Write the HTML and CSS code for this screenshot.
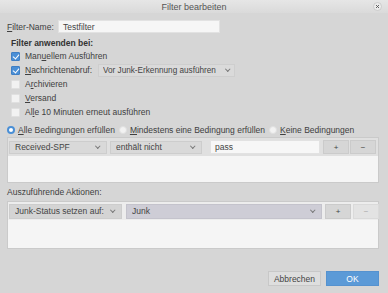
FILE: index.html
```html
<!DOCTYPE html>
<html lang="de">
<head>
<meta charset="utf-8">
<title>Filter bearbeiten</title>
<link rel="stylesheet" href="styles.css">
</head>
<body>
<div class="window">
  <div class="titlebar">
    <span class="title">Filter bearbeiten</span>
    <span class="close"><svg width="9" height="9" viewBox="0 0 9 9"><circle cx="4.5" cy="4.5" r="4" fill="#ececec" stroke="#c4c4c4" stroke-width="0.8"/><path d="M3 3 L6 6 M6 3 L3 6" stroke="#555" stroke-width="0.9"/></svg></span>
  </div>
  <div class="content">
    <div class="name-row">
      <span class="name-label"><u>F</u>ilter-Name:</span>
      <span class="textfield name-field">Testfilter</span>
    </div>
    <div class="heading">Filter anwenden bei:</div>
    <div class="checks">
      <div class="check-row"><span class="cb checked"></span><span>Man<u>u</u>ellem Ausführen</span></div>
      <div class="check-row"><span class="cb checked"></span><span class="fetch-label"><u>N</u>achrichtenabruf:</span><span class="dropdown fetch-drop"><span class="dd-text">Vor Junk-Erkennung ausführen</span><span class="chev"></span></span></div>
      <div class="check-row"><span class="cb"></span><span>A<u>r</u>chivieren</span></div>
      <div class="check-row"><span class="cb"></span><span><u>V</u>ersand</span></div>
      <div class="check-row"><span class="cb"></span><span>Al<u>l</u>e 10 Minuten erneut ausführen</span></div>
    </div>
    <div class="radio-row">
      <span class="radio on"></span><span class="radio-label"><u>A</u>lle Bedingungen erfüllen</span>
      <span class="radio"></span><span class="radio-label"><u>M</u>indestens eine Bedingung erfüllen</span>
      <span class="radio"></span><span class="radio-label"><u>K</u>eine Bedingungen</span>
    </div>
    <div class="listbox cond-box">
      <div class="list-row cond-row">
        <span class="dropdown dd-field"><span class="dd-text">Received-SPF</span><span class="chev"></span></span>
        <span class="dropdown dd-op"><span class="dd-text">enthält nicht</span><span class="chev"></span></span>
        <span class="textfield value-field">pass</span>
        <span class="btn small">+</span>
        <span class="btn small">−</span>
      </div>
    </div>
    <div class="section-label">Auszuführende Aktionen:</div>
    <div class="listbox action-box">
      <div class="list-row action-row">
        <span class="dropdown dd-action"><span class="dd-text">Junk-Status setzen auf:</span><span class="chev"></span></span>
        <span class="dropdown dd-junk"><span class="dd-text">Junk</span><span class="chev"></span></span>
        <span class="btn small">+</span>
        <span class="btn small disabled">−</span>
      </div>
    </div>
    <div class="footer">
      <span class="btn cancel">Abbrechen</span>
      <span class="btn ok">OK</span>
    </div>
  </div>
</div>
</body>
</html>
```
FILE: styles.css
```css
* { box-sizing: border-box; }
html, body { margin: 0; padding: 0; }
body {
  width: 388px;
  height: 293px;
  background: #d6d6d6;
  font-family: "Liberation Sans", Arial, sans-serif;
  font-size: 8.5px;
  color: #404040;
  overflow: hidden;
  white-space: nowrap;
}
u { text-decoration: underline; text-underline-offset: 1px; }
.window { width: 388px; height: 293px; display: flex; flex-direction: column; }
.titlebar {
  height: 13px;
  position: relative;
  display: flex;
  justify-content: center;
  align-items: center;
  background: linear-gradient(#e6e6e6, #dadada);
}
.title { color: #555; font-size: 9px; }
.close { position: absolute; right: 6px; top: 2px; width: 9px; height: 9px; display: flex; }
.content { padding: 0 9px 0 7px; display: flex; flex-direction: column; }
.name-row { margin-top: 7px; height: 13px; display: flex; align-items: center; }
.name-label { width: 51px; }
.textfield {
  background: #f6f6f6;
  border: 1px solid #e2e2e2;
  height: 13px;
  display: flex;
  align-items: center;
  padding-left: 4px;
  color: #444;
}
.name-field { width: 162px; }
.heading { font-weight: bold; margin-top: 4px; height: 12px; line-height: 12px; padding-left: 4px; color: #333; }
.checks { display: flex; flex-direction: column; padding-left: 4px; }
.check-row { height: 14px; display: flex; align-items: center; }
.cb {
  width: 9px; height: 9px;
  background: #f2f2f2;
  border: 1px solid #e0e0e0;
  border-radius: 1px;
  margin-right: 5px;
  flex: none;
  position: relative;
}
.cb.checked { background: #4a8fd6; border-color: #3f7fc4; }
.cb.checked::after {
  content: "";
  position: absolute;
  left: 2px; top: 0px;
  width: 3px; height: 5px;
  border: solid #fff;
  border-width: 0 1.4px 1.4px 0;
  transform: rotate(40deg);
}
.dropdown {
  height: 13px;
  background: #d9d9d9;
  border: 1px solid #cdcdcd;
  display: flex;
  align-items: center;
  justify-content: space-between;
  padding: 0 4px 0 5px;
  color: #444;
  overflow: hidden;
  flex: none;
}
.dd-text { overflow: hidden; flex: 1; min-width: 0; }
.chev {
  width: 3.5px; height: 3.5px;
  border: solid #777;
  border-width: 0 1px 1px 0;
  transform: rotate(45deg);
  margin-top: -2px;
  margin-right: 3px;
  margin-left: 4px;
  flex: none;
}
.fetch-label { width: 73px; }
.fetch-drop { width: 137px; background: #dadada; border-color: #cecece; padding: 0 3px 0 4px; font-size: 8.2px; }
.fetch-drop .chev { margin-left: 2px; margin-right: 2px; }
.radio-row { margin-top: 4px; height: 14px; display: flex; align-items: center; }
.radio {
  width: 8px; height: 8px;
  border-radius: 50%;
  background: #f2f2f2;
  border: 1px solid #e0e0e0;
  margin-right: 3px;
  margin-left: 4px;
  flex: none;
}
.radio:first-child { margin-left: 0; }
.radio.on { background: #fff; border: 2.5px solid #4a8fd6; }
.listbox { background: #f5f5f5; border: 1px solid #cacaca; width: 372px; }
.cond-box { height: 46px; }
.list-row { display: flex; align-items: center; background: #e0e0e0; padding: 2px 1px; }
.cond-row { height: 18px; }
.dd-field { width: 98px; margin-right: 3px; }
.dd-op { width: 92px; margin-right: 8px; }
.value-field { width: 112px; height: 14px; background: #f7f7f7; margin-right: 3px; }
.btn {
  display: flex; align-items: center; justify-content: center;
  background: #d6d6d6;
  border: 1px solid #cbcbcb;
  color: #444;
  flex: none;
}
.btn.small { width: 26px; height: 14px; margin-right: 1px; font-size: 8px; }
.btn.disabled { background: #e3e3e3; border-color: #dadada; color: #aaa; }
.section-label { height: 18px; display: flex; align-items: center; margin-top: 0; }
.action-box { height: 48px; }
.action-row { height: 18px; background: #ededed; }
.dd-action { width: 113px; margin-right: 4px; height: 15px; background: #d4d4d4; }
.dd-junk { width: 196px; margin-right: 3px; height: 15px; background: #cecdd6; border-color: #c4c3cc; }
.action-row .btn.small { height: 15px; margin-right: 2px; }
.footer { display: flex; justify-content: flex-end; margin-top: 22px; padding-right: 0; }
.btn.cancel { width: 53px; height: 15px; background: #dedede; border-color: #c8c8c8; margin-right: 5px; }
.btn.ok { width: 53px; height: 15px; background: #5b9ad7; border-color: #5592cf; color: #fff; }
```
